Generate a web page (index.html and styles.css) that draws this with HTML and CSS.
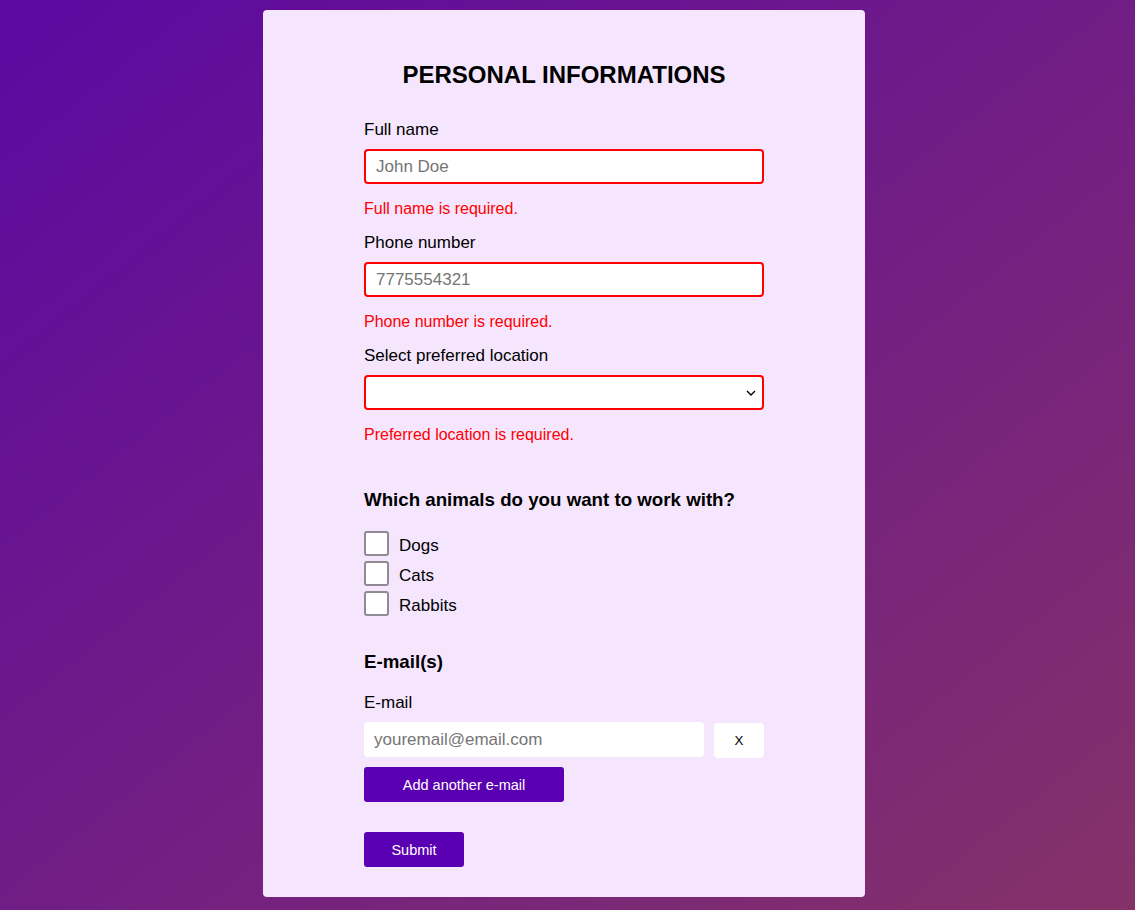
FILE: index.html
```html
<!DOCTYPE html>
<html lang="en">
<head>
<meta charset="utf-8">
<title>Personal informations</title>
<link rel="stylesheet" href="styles.css">
</head>
<body>
<div class="page">
  <form class="card">
    <h1 class="title">PERSONAL INFORMATIONS</h1>

    <div class="field">
      <label class="label" for="fullname">Full name</label>
      <input class="input input-error" id="fullname" type="text" placeholder="John Doe">
      <p class="error">Full name is required.</p>
    </div>

    <div class="field">
      <label class="label" for="phone">Phone number</label>
      <input class="input input-error" id="phone" type="text" placeholder="7775554321">
      <p class="error">Phone number is required.</p>
    </div>

    <div class="field">
      <label class="label" for="location">Select preferred location</label>
      <select class="input select input-error" id="location">
        <option value=""></option>
      </select>
      <p class="error">Preferred location is required.</p>
    </div>

    <h3 class="section animals-title">Which animals do you want to work with?</h3>
    <div class="checks">
      <label class="check"><input type="checkbox" class="box"><span>Dogs</span></label>
      <label class="check"><input type="checkbox" class="box"><span>Cats</span></label>
      <label class="check"><input type="checkbox" class="box"><span>Rabbits</span></label>
    </div>

    <h3 class="section emails-title">E-mail(s)</h3>
    <label class="label" for="email">E-mail</label>
    <div class="email-row">
      <input class="input email" id="email" type="text" placeholder="youremail@email.com">
      <button type="button" class="remove">X</button>
    </div>
    <button type="button" class="btn add">Add another e-mail</button>
    <button type="submit" class="btn submit">Submit</button>
  </form>
</div>
</body>
</html>
```

FILE: styles.css
```css
* { box-sizing: border-box; }

html, body {
  margin: 0;
  padding: 0;
}

body {
  min-height: 910px;
  background: linear-gradient(to bottom right, #5c08a2, #853269);
  font-family: "Liberation Sans", Arial, sans-serif;
  color: #000;
}

.page {
  display: flex;
  justify-content: center;
  padding: 10px 7px 13px 0;
}

.card {
  width: 602px;
  height: 887px;
  background: #f5e6fe;
  border-radius: 4px;
  padding: 51px 101px 30px;
  display: flex;
  flex-direction: column;
  align-items: flex-start;
}

.title {
  align-self: stretch;
  text-align: center;
  font-size: 24px;
  font-weight: bold;
  margin: 0 0 31px;
  line-height: 28px;
}

.field {
  display: flex;
  flex-direction: column;
  width: 400px;
  margin-bottom: 15px;
}

.label {
  display: block;
  font-size: 17px;
  line-height: 20px;
  margin: 0 0 9px;
}

.input {
  width: 400px;
  height: 35px;
  font-family: "Liberation Sans", Arial, sans-serif;
  font-size: 17px;
  padding: 0 10px;
  background: #fff;
  border: none;
  border-radius: 4px;
  outline: none;
  color: #000;
}

.input::placeholder {
  color: #757575;
}

.input-error {
  border: 2px solid #ff0000;
}

.select {
  appearance: none;
  -webkit-appearance: none;
  padding: 0 6px;
  background-color: #fff;
  background-image: url("data:image/svg+xml,%3Csvg xmlns='http://www.w3.org/2000/svg' width='10' height='6' viewBox='0 0 10 6'%3E%3Cpath d='M1 1l4 4 4-4' fill='none' stroke='%23000' stroke-width='1.4'/%3E%3C/svg%3E");
  background-repeat: no-repeat;
  background-position: right 6px center;
  background-size: 10px 6px;
}

.error {
  color: #ff0000;
  font-size: 16px;
  line-height: 18px;
  margin: 16px 0 0;
}

.section {
  font-size: 18.72px;
  font-weight: bold;
  line-height: 22px;
  margin: 0;
}

.animals-title {
  margin-top: 30px;
  margin-bottom: 20px;
}

.checks {
  display: flex;
  flex-direction: column;
  gap: 5px;
}

.check {
  display: flex;
  align-items: center;
  font-size: 17px;
  height: 25px;
}

.check span {
  margin-left: 10px;
  margin-top: 4px;
}

.box {
  appearance: none;
  -webkit-appearance: none;
  width: 25px;
  height: 25px;
  margin: 0;
  background: #fff;
  border: 2px solid #8e8b95;
  border-radius: 3px;
}

.emails-title {
  margin-top: 35px;
  margin-bottom: 20px;
}

.email-row {
  display: flex;
  align-items: flex-start;
  gap: 10px;
  width: 400px;
}

.email {
  width: 340px;
}

.remove {
  width: 50px;
  height: 35px;
  margin-top: 1px;
  border: none;
  border-radius: 4px;
  background: #fff;
  font-family: "Liberation Sans", Arial, sans-serif;
  font-size: 13.33px;
  color: #000;
  padding: 0;
}

.btn {
  height: 35px;
  border: none;
  border-radius: 3px;
  background: #5a00b2;
  color: #fff;
  font-family: "Liberation Sans", Arial, sans-serif;
  font-size: 14.5px;
  padding: 0;
}

.add {
  width: 200px;
  margin-top: 9px;
}

.submit {
  width: 100px;
  margin-top: 30px;
}
```
